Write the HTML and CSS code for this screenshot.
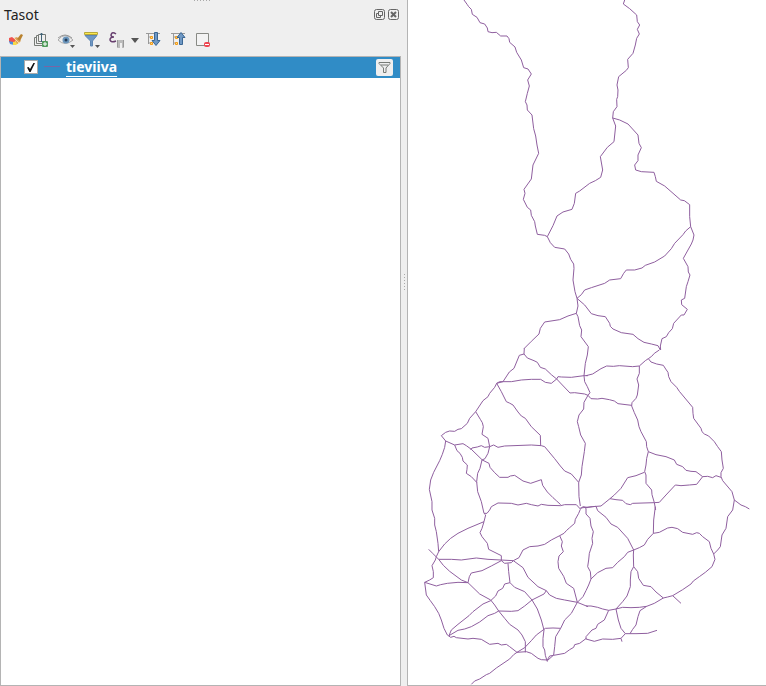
FILE: index.html
```html
<!DOCTYPE html>
<html lang="fi">
<head>
<meta charset="utf-8">
<title>Tasot</title>
<link rel="stylesheet" href="styles.css">
</head>
<body>
<main class="workspace">
  <section class="panel" aria-labelledby="panel-title">
    <div class="grip grip-top"></div>
    <header class="titlebar">
      <h1 id="panel-title">Tasot</h1>
      <button class="window-button" aria-label="Irrota"><svg width="11" height="11" viewBox="0 0 11 11"><rect x=".5" y=".5" width="10" height="10" rx="2"/><path d="M4.5 2.5h4v4h-4zM4 4.5H2.5v4h4V7"/></svg></button>
      <button class="window-button" aria-label="Sulje"><svg width="11" height="11" viewBox="0 0 11 11"><rect x=".5" y=".5" width="10" height="10" rx="2"/><path class="cross" d="M3 3l5 5M8 3L3 8"/></svg></button>
    </header>
    <div class="toolbar" role="toolbar">
      <button class="tool" aria-label="Tyyli"><svg width="18" height="18" viewBox="0 0 18 18"><path d="M2 7l3-1 4 3-2 4-5-2z" fill="#ef5350"/><path d="M2 10l4 1 1 3-4-1z" fill="#4c8fe0"/><path d="M6 11l4-1 3 1-4 3-3 0z" fill="#f7db4a"/><path d="M7 7l3-1 4 4-4 3z" fill="#e0a55c"/><path d="M10 8l4-5 2 1-3 6z" fill="#b9822f"/><path d="M7 7l5 5" stroke="#f7dca8"/></svg></button>
      <button class="tool" aria-label="Lisää ryhmä"><svg width="18" height="18" viewBox="0 0 18 18" fill="none" stroke="#777b76"><path d="M4 6.500H2.500v8H10M6 4.500H4.500v8H10M6.500 3.500h7v7h-7z"/><path d="M9.500 11V2M8 4l1.500-2L11 4" stroke="#426477"/><rect x="10" y="10" width="6" height="6" rx="1" fill="#519b5b" stroke="none"/><path d="M13 11v4M11 13h4" stroke="#fff"/></svg></button>
      <button class="tool" aria-label="Näkyvyys"><svg width="18" height="18" viewBox="0 0 18 18"><path d="M1 9q7-9 15 0-8 7-15 0z" fill="#eee" stroke="#aaa"/><path d="M1 7q7-6 14 0" fill="none" stroke="#999"/><circle cx="9" cy="9" r="3.500" fill="#6b96bd"/><circle cx="9" cy="9" r="1.500" fill="#253d58"/><path d="M13 14h5l-2.500 3z" fill="#555"/></svg></button>
      <button class="tool" aria-label="Suodata"><svg width="18" height="18" viewBox="0 0 18 18"><path d="M3 4.500h12L10.500 10v5h-2v-5z" fill="#6f98c4" stroke="#5f87b3"/><path d="M2.500 1.500h13v2h-13z" fill="#fce94f" stroke="#b7a93b"/><path d="M13 14h5l-2.500 3z" fill="#555"/></svg></button>
      <button class="tool" aria-label="Lausekesuodatin"><svg width="18" height="18" viewBox="0 0 18 18" fill="none"><path d="M9 3Q5 0 4 4q0 2 3 2-4 0-4 3 1 3 6 1" stroke="#68406f" stroke-width="1.500"/><path d="M10 9h7v8h-2v-5h-2v5h-3z" fill="#bbb"/><path d="M10.500 9v7M16.500 9v7" stroke="#999"/></svg></button>
      <button class="menu-arrow" aria-label="Lisää"><svg width="8" height="5" viewBox="0 0 8 5"><path d="M0 0h8L4 5z" fill="#555"/></svg></button>
      <button class="tool" aria-label="Laajenna"><svg width="18" height="18" viewBox="0 0 18 18" fill="none"><path d="M3.500 2v11M1 2.500h14M3.500 6H6M3.500 12H6" stroke="#999"/><path d="M5.500 5.500h2v2h-2zM5.500 11.500h2v2h-2z" fill="#fce08a" stroke="#f29a18"/><path d="M9.500 1.500h3v8H15l-4 5-4-5h2.500z" fill="#6f98c4" stroke="#3b6794"/></svg></button>
      <button class="tool" aria-label="Supista"><svg width="18" height="18" viewBox="0 0 18 18" fill="none"><path d="M3.500 2v12M1 2.500h14M3.500 6H6M3.500 12H6" stroke="#999"/><path d="M5.500 5.500h2v2h-2zM5.500 11.500h2v2h-2z" fill="#fce08a" stroke="#f29a18"/><path d="M9.500 13.500h3v-7H15l-4-5-4 5h2.500z" fill="#6f98c4" stroke="#3b6794"/></svg></button>
      <button class="tool" aria-label="Poista"><svg width="18" height="18" viewBox="0 0 18 18"><path d="M1.500 2.500h12v12h-12z" fill="#f3f3f3" stroke="#888a85"/><rect x="9" y="11" width="6" height="5" rx="2" fill="#ef4550"/><path d="M10 13.500h4" stroke="#fff"/></svg></button>
    </div>
    <div class="layer-tree">
      <div class="layer">
        <input type="checkbox" id="layer-road" checked>
        <svg class="symbol" width="16" height="2" viewBox="0 0 16 2"><path d="M0 .5h16" stroke="#7965a4"/></svg>
        <label for="layer-road">tieviiva</label>
        <button class="filter" aria-label="Tason suodatin"><svg width="13" height="13" viewBox="0 0 13 13" fill="none" stroke="#777b76"><path d="M1 1.500h11v1L8 7v4.500H5.500V7L1 2.500zM3 4h7"/></svg></button>
      </div>
    </div>
  </section>
  <div class="splitter"><div class="grip grip-side"></div></div>
  <section class="map" aria-label="Kartta">
    <svg class="roads" viewBox="0 0 358 685" preserveAspectRatio="xMinYMin meet">
      <g transform="scale(.333333)">
        <path d="M168 0L178 14 182 20 190 28 193 43 207 52 216 68 230 72 238 84 240 95 252 98 265 97 278 108 297 108 303 116 305 127 321 141 326 157 340 180 347 203 360 207 370 222 359 240 364 258 358 280 352 305 357 315 358 330 372 345 377 386"/>
        <path d="M650 0L646 12 665 26 686 45 688 65 695 75 688 88 694 102 686 115 682 135 675 160 659 178 661 203 655 211 632 230 627 255 630 270 629 290 626 298 627 320 616 335 614 354"/>
      </g>
      <g transform="translate(0 110) scale(.333333)">
        <path d="M377 56L383 78 387 105 392 130 375 165 370 207 348 238 351 250 346 268 358 292 368 300 370 316 380 335 382 348 388 373 410 376 418 380"/>
        <path d="M614 24L623 48 618 95 598 112 577 140 584 180 578 202 562 212 545 220 515 243 503 250 499 280 492 298 465 306 447 318 435 347 418 380"/>
        <path d="M614 24L635 30 660 42 690 75 693 100 700 113 690 135 690 152 680 165 683 180 700 185 738 187 742 200 745 214 770 228 818 270 829 272 845 284 845 320 848 350"/>
      </g>
      <g transform="translate(0 220) scale(.333333)">
        <path d="M418 50L427 68 440 82 470 87 482 102 488 118 497 132 498 145 495 180 501 215 507 235 510 258 505 280"/>
        <path d="M848 20L833 33 825 44 800 70 790 86 770 108 740 126 712 136 702 144 680 150 655 150 647 160 638 176 605 180 590 190 550 203 530 210 520 224 507 235"/>
        <path d="M848 20L858 45 855 60 850 72 826 115 840 140 841 156 846 165 840 185 835 200 830 235 820 240 821 254 838 268 828 285 820 285 797 310 793 326 782 338 775 350 762 356 757 378 758 390"/>
        <path d="M507 235L530 255 550 281 570 287 592 290 605 310 607 319 615 327 640 338 675 343 690 356 708 367 730 372 750 377 757 390"/>
        <path d="M505 280L480 288 455 299 410 306 397 325 393 342 370 364 349 385"/>
        <path d="M505 280L510 290 515 317 521 330 519 350 541 380 538 405"/>
      </g>
      <g transform="translate(0 330) scale(.333333)">
        <path d="M349 54L348 72 334 76 318 115 304 126 285 155 266 160 260 172 245 190 240 200 225 212 203 245 185 265 178 280 160 296 150 298 140 304 125 303 113 307 100 317 113 333 140 345 165 341 175 347 190 358 223 390 243 400 246 412 260 428 275 442 300 442 307 438 320 436 345 453 368 460 400 449 404 466 418 486 435 503 445 512 458 524"/>
        <path d="M538 75L532 100 528 137 530 155 538 170 546 188 540 196 528 217 527 237 513 255 508 275 512 290 518 315 532 340 529 365 522 410 520 435 512 457"/>
        <path d="M348 72L358 84 378 92 388 97 397 112 412 117 430 134 446 147 463 165 486 189 500 188 530 192 540 196"/>
        <path d="M266 160L275 155 310 155 340 150 370 148 398 148 412 157 430 160 446 147 450 140 460 141 490 142 528 137 540 137"/>
        <path d="M203 245L217 268 223 278 226 290 222 313 240 325 245 350 240 370 231 386 222 390 216 415 209 430 206 455 209 485 220 515 228 550"/>
        <path d="M113 333L110 352 103 373 95 392 77 427 68 450 64 478 72 515 72 540"/>
        <path d="M140 345L147 362 156 370 163 382 165 393 178 405 177 418 175 430 190 440 206 457"/>
        <path d="M188 360L192 354 208 351 220 347 230 352 245 350 257 345 270 352 290 348 370 345 400 347 410 350 440 386 457 408 470 423 490 432 512 457 513 500 517 528"/>
        <path d="M266 160L280 185 295 215 304 219 315 225 330 246 340 258 352 265 370 290 397 316 398 347"/>
        <path d="M237 550L245 540 250 530 270 519 310 520 330 525 355 520 370 524 390 528 400 523 420 526 458 527 470 524 505 524 517 537 525 530 540 533"/>
      </g>
      <g transform="translate(178 330) scale(.333333)">
        <path d="M220 60L205 70 197 79 187 86 195 96 212 102 232 106 239 117 246 127 248 140 255 155 272 172 280 184 320 232 321 250 323 265 345 295 348 305 355 312 368 318 385 335 395 350 406 365 408 390 412 415 405 428 405 440 410 452 438 485 445 510"/>
        <path d="M445 510L465 525 478 530 490 537"/>
        <path d="M187 86L178 92 160 108 140 110 100 107 82 109 62 108 45 116 20 132 0 137"/>
        <path d="M160 108L160 130 153 147 158 165 156 180 154 195 150 205 138 218 137 228 145 248 155 270 159 290 165 305 181 335 182 350 187 365 182 385 180 405 176 425 180 435 180 460 197 480 198 494 205 518 209 540"/>
        <path d="M6 196L15 206 35 207 48 205 70 209 85 213 96 221 120 224 137 226"/>
        <path d="M187 365L210 374 240 380 265 390 272 403 290 410 300 421 315 424 330 425 350 440 365 439 380 443 390 437 405 442M350 440L332 463 310 465 285 467 268 465 240 495 220 517 205 518 140 520 133 524 120 521 110 511 90 509 72 506 85 495 105 475 125 443 150 437 175 427"/>
        <path d="M72 506L45 528 20 530 0 533"/>
      </g>
      <g transform="translate(0 500) scale(.333333)">
        <path d="M72 30L80 55 80 75 85 95 90 130 92 155 85 170 82 180 72 197 76 215 76 233 65 240 50 247 55 285 67 302 80 320 92 340 100 360 108 385 118 405"/>
        <path d="M62 148L74 160 92 178 106 196 125 214 160 240 180 248 215 282 248 300 260 315 272 333 290 355 305 373 330 390 342 405 352 425 352 457"/>
        <path d="M228 40L233 45 228 65 222 85 216 98 222 110 238 130 242 148 280 167 280 182 290 190 310 188 316 182"/>
        <path d="M228 40L237 40M228 65L180 85 150 100 128 115 110 132 92 155"/>
        <path d="M92 178L130 178 160 180 205 174 240 178 316 182"/>
        <path d="M300 190L302 215 306 248 290 252 284 265 270 273 263 288 248 302 225 312 195 335 183 347 150 373 130 390 123 407"/>
        <path d="M280 182L250 198 222 212 190 219 184 230 180 248 150 247 118 250 98 254 85 258 50 247"/>
        <path d="M306 248L320 262 350 275 372 300 388 327 400 360 408 390 405 415 405 440 410 450 412 466 418 485"/>
        <path d="M316 182L333 173 345 150 365 140 390 138 410 133 430 120 455 107 468 100 475 92 485 83 500 70 502 58 512 40 517 28"/>
        <path d="M316 182L345 203 360 232 390 260 415 272 425 285 445 295 470 300 508 307 540 320"/>
        <path d="M455 107L463 125 460 138 466 155 453 168 450 185 452 205 467 229 475 250 497 265 508 307"/>
        <path d="M534 272L525 290 508 307 490 340 470 360 458 385 443 410 440 440 437 465 418 482"/>
        <path d="M415 272L408 282 372 300 350 318 330 332 310 334 272 333 260 340 240 347 215 366 190 380 170 387 150 391 123 407"/>
        <path d="M118 405L128 412 138 409 145 413 180 417 195 415 220 418 245 433 270 430 280 435 295 433 305 440 327 457 355 455 370 460 390 475 400 479 418 480 425 468 437 466 470 460 485 449 497 442 500 434 515 430 535 415"/>
        <path d="M458 385L435 384 412 385 385 405 370 422 350 443 327 457 317 464 305 477 265 504 245 520 235 524 215 537 200 543 190 553"/>
      </g>
      <g transform="translate(178 500) scale(.333333)">
        <path d="M-17 24L0 22 30 19M-6 21L0 25 0 42 12 55 15 78 22 95 18 115 20 130 10 160 8 180 5 200 13 215 15 237 8 255 0 272"/>
        <path d="M30 19L35 32 60 52 75 72 95 82 125 115 143 150"/>
        <path d="M208 20L203 60 202 100 185 118 175 135 160 143 143 150 125 157 115 170 95 187 80 203 60 205 35 218 15 237"/>
        <path d="M202 100L220 97 245 84 258 82 275 86 290 97 320 103 332 98 340 100 350 110 370 125 375 145 383 162 387 178 378 200 358 217 340 230 322 243 315 252 290 269 260 287 245 291 232 294 205 310 182 319 160 322 135 323 110 322 90 327 68 331 50 327 35 322 15 318 0 318"/>
        <path d="M445 0L440 30 425 50 420 85 408 105 403 140 395 150 383 162"/>
        <path d="M260 287L285 310M143 150L142 165 143 200 155 215 158 235 172 256 195 260 210 276 232 294"/>
        <path d="M143 200L135 215 133 240 133 260 123 288 110 305 90 327 97 360 105 385 118 401 105 415 80 418 50 417 25 424 0 417 0 410 18 390 30 385 35 373 55 360 68 331"/>
        <path d="M182 319L162 332 156 350 150 375 140 388 132 401"/>
        <path d="M118 401L150 401 185 400 213 391M105 415L108 425"/>
      </g>
    </svg>
  </section>
</main>
</body>
</html>
```
FILE: styles.css
```css
* { box-sizing: border-box; }
body {
  margin: 0;
  background: #efefef;
  color: #222;
  font: 14px/20px "Noto Sans", sans-serif;
}
button {
  display: grid;
  place-items: center;
  margin: 0;
  padding: 0;
  border: 0;
  background: none;
}
svg { display: block; }
.workspace {
  display: grid;
  grid-template-columns: minmax(0, 401fr) 6px minmax(0, 359fr);
  min-height: 100vh;
}
.panel {
  position: relative;
  display: flex;
  flex-direction: column;
}
.grip-top {
  position: absolute;
  top: 0;
  left: 50%;
  width: 17px;
  height: 1px;
  margin-left: -7px;
  background: repeating-linear-gradient(90deg, #aaa 0 1px, transparent 1px 3px);
}
.titlebar {
  display: flex;
  align-items: center;
  gap: 3px;
  height: 29px;
  padding: 0 2px 0 4px;
}
h1 {
  flex: 1;
  margin: 0;
  font-size: 14px;
  font-weight: 400;
}
.window-button svg { fill: none; stroke: #666; }
.window-button .cross { stroke-width: 2; }
.toolbar {
  display: flex;
  align-items: center;
  gap: 7px;
  height: 27px;
  padding: 0 7px 5px;
}
.menu-arrow {
  width: 8px;
  height: 18px;
  margin: 0 -1px;
}
.layer-tree {
  flex: 1;
  border: 1px solid #b4b4b4;
  background: #fff;
}
.layer {
  display: flex;
  align-items: center;
  height: 21px;
  padding: 0 7px 1px 23px;
  background: #308cc6;
}
.layer input {
  display: grid;
  justify-items: center;
  align-items: start;
  appearance: none;
  width: 14px;
  height: 14px;
  margin: 0;
  border: 1px solid #aaa;
  background: #fff;
}
.layer input:checked::after {
  content: "";
  width: 8px;
  height: 9px;
  margin-top: 2px;
  background: #111;
  clip-path: polygon(0 50%, 20% 45%, 38% 68%, 80% 0, 100% 0, 45% 100%, 30% 100%);
}
.symbol { margin: 0 6px; }
.layer label {
  color: #fff;
  font-weight: 700;
  text-decoration: underline;
  text-decoration-thickness: 1px;
  text-underline-offset: 4px;
}
.filter {
  width: 17px;
  height: 17px;
  margin-left: auto;
  border-radius: 2px;
  background: #efefef;
}
.splitter { display: grid; place-items: center; }
.grip-side {
  width: 1px;
  height: 16px;
  margin-bottom: 122px;
  background: repeating-linear-gradient(#aaa 0 1px, transparent 1px 3px);
}
.map {
  border-left: 1px solid #b4b4b4;
  border-bottom: 1px solid #b4b4b4;
  background: #fff;
}
.roads { width: 100%; }
.roads path {
  fill: none;
  stroke: #8f5f9f;
  stroke-width: 1px;
  stroke-linejoin: round;
  vector-effect: non-scaling-stroke;
}
```
